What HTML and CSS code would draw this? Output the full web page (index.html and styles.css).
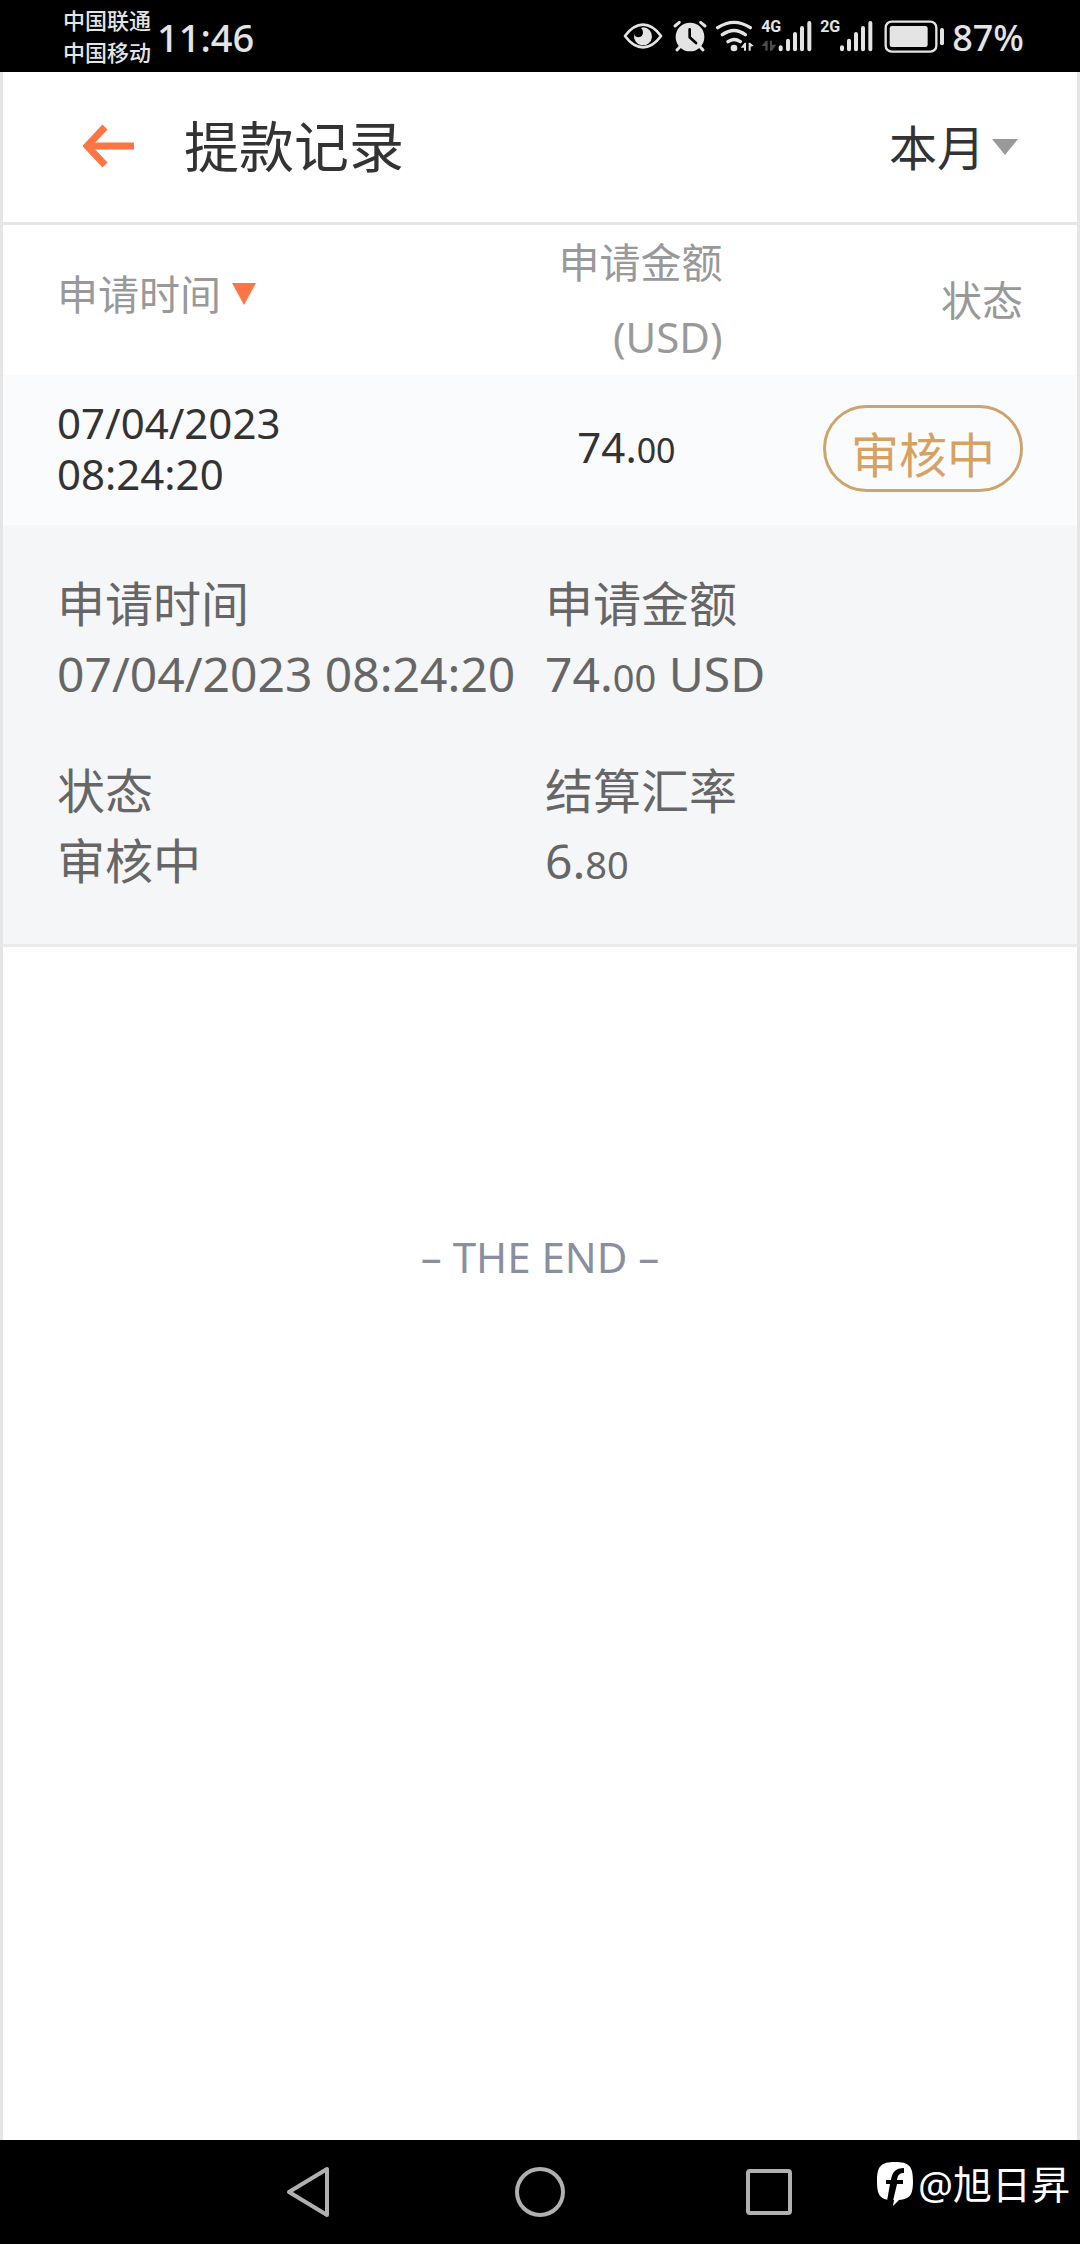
FILE: index.html
```html
<!DOCTYPE html>
<html lang="zh-CN">
<head>
<meta charset="utf-8">
<meta name="viewport" content="width=device-width, initial-scale=1">
<title>提款记录</title>
<link rel="stylesheet" href="styles.css">
</head>
<body>
<div class="status-bar">
  <div class="carriers"><span>中国联通</span><span>中国移动</span></div>
  <span class="clock">11:46</span>
  <div class="indicators">
    <svg width="43" height="36" viewBox="66 54 129 108" aria-hidden="true">
      <path d="M75 108Q100 74 129 74Q158 74 183 108Q158 142 129 142Q100 142 75 108Z" fill="none" stroke="#e4e4e4" stroke-width="8" stroke-linejoin="round"/>
      <path d="M129 82A27 27 0 1 1 103 102Q105 112 116 112Q129 110 129 96Q129 90 123 84Z" fill="#e4e4e4"/>
    </svg>
    <svg width="38" height="36" viewBox="213 54 114 108" aria-hidden="true">
      <circle cx="270" cy="111" r="43" fill="#e4e4e4"/>
      <path d="M225 78L238 67M315 78L302 67" stroke="#e4e4e4" stroke-width="9" stroke-linecap="round"/>
      <path d="M240 140L231 150M300 140L309 150" stroke="#e4e4e4" stroke-width="9" stroke-linecap="round"/>
      <path d="M269 88V112L288 129" fill="none" stroke="#000" stroke-width="8" stroke-linecap="round" stroke-linejoin="round"/>
    </svg>
    <svg width="40" height="36" viewBox="345 54 120 108" aria-hidden="true">
      <path d="M353 83Q402 51 451 83M367 104Q402 79 436 104M384 125Q402 112 421 125" fill="none" stroke="#e4e4e4" stroke-width="10" stroke-linecap="round"/>
      <circle cx="402" cy="144" r="10" fill="#e4e4e4"/>
      <path d="M422 143L434 128H438V152H432V143ZM446 128H450L461 137L452 140V152H446Z" fill="#e4e4e4"/>
    </svg>
    <div class="signal">
      <span class="network">4G</span>
      <svg width="53" height="36" viewBox="483 54 159 108" aria-hidden="true">
        <path d="M485 138L498 122H503V152H496V138ZM510 122H516V134H529L516 152H510Z" fill="#4b4b4b"/>
        <path d="M542 142V148M564 122V148M585 102V148M606 84V148M628 69V148" stroke="#e4e4e4" stroke-width="12" stroke-linecap="round"/>
      </svg>
    </div>
    <div class="signal">
      <span class="network">2G</span>
      <svg width="55" height="36" viewBox="660 54 165 108" aria-hidden="true">
        <path d="M726 142V148M747 122V148M768 102V148M789 84V148M811 69V148" stroke="#e4e4e4" stroke-width="12" stroke-linecap="round"/>
      </svg>
    </div>
    <svg width="65" height="36" viewBox="843 54 195 108" aria-hidden="true">
      <rect x="857" y="65" width="152" height="90" rx="18" fill="none" stroke="#e4e4e4" stroke-width="7"/>
      <rect x="869" y="78" width="114" height="63" rx="7" fill="#e4e4e4"/>
      <rect x="1020" y="84" width="12" height="52" rx="6" fill="#e4e4e4"/>
    </svg>
    <span class="battery-level">87%</span>
  </div>
</div>

<main class="page">
  <header class="toolbar">
    <button class="back" type="button" aria-label="返回">
      <svg width="52" height="44" viewBox="0 0 52 44" aria-hidden="true">
        <path d="M51 22H5M22 3L4 22L22 41" fill="none" stroke="#fd7545" stroke-width="7"/>
      </svg>
    </button>
    <h1 class="title">提款记录</h1>
    <label class="period">
      <select class="period-select" aria-label="时间范围"><option>本月</option></select>
      <svg width="26" height="16" viewBox="0 0 26 16" aria-hidden="true"><path d="M0 0H26L13 16Z" fill="#999"/></svg>
    </label>
  </header>

  <table class="records">
    <colgroup><col class="col-time"><col class="col-amount"><col class="col-status"></colgroup>
    <thead>
      <tr>
        <th class="time" scope="col">
          <button class="sort" type="button">申请时间
            <svg width="24" height="22" viewBox="0 0 24 22" aria-hidden="true"><path d="M0 0H24L12 22Z" fill="#fd7545"/></svg>
          </button>
        </th>
        <th class="amount" scope="col">申请金额<br><span class="unit">(USD)</span></th>
        <th class="status" scope="col">状态</th>
      </tr>
    </thead>
    <tbody>
      <tr class="record">
        <td class="time">07/04/2023<br>08:24:20</td>
        <td class="amount">74.<span class="cents">00</span></td>
        <td class="status"><span class="badge">审核中</span></td>
      </tr>
      <tr class="record-detail">
        <td colspan="3">
          <dl class="details">
            <div><dt>申请时间</dt><dd>07/04/2023 08:24:20</dd></div>
            <div><dt>申请金额</dt><dd>74.<span class="cents">00</span> USD</dd></div>
            <div><dt>状态</dt><dd>审核中</dd></div>
            <div><dt>结算汇率</dt><dd>6.<span class="cents">80</span></dd></div>
          </dl>
        </td>
      </tr>
    </tbody>
  </table>

  <p class="end">– THE END –</p>
</main>

<nav class="nav-bar" aria-label="系统导航">
  <button type="button" aria-label="返回">
    <svg width="52" height="52" viewBox="0 0 52 52" aria-hidden="true"><path d="M5 26L43 3V49Z" fill="none" stroke="#b0b0b0" stroke-width="4" stroke-linejoin="round"/></svg>
  </button>
  <button type="button" aria-label="主屏幕">
    <svg width="52" height="52" viewBox="0 0 52 52" aria-hidden="true"><circle cx="26" cy="26" r="23" fill="none" stroke="#b0b0b0" stroke-width="4"/></svg>
  </button>
  <button type="button" aria-label="最近任务">
    <svg width="52" height="52" viewBox="0 0 52 52" aria-hidden="true"><rect x="4" y="5" width="42" height="42" rx="2" fill="none" stroke="#b0b0b0" stroke-width="4"/></svg>
  </button>
  <div class="watermark">
    <svg width="38" height="46" viewBox="0 0 38 46" aria-hidden="true">
      <path d="M19 1C33 1 37 5 37 20C37 34 34 38 23 39L17 45L18 39H12C4 37 1 34 1 20C1 5 5 1 19 1Z" fill="#fff"/>
      <path d="M28 7C20 7 16 11 15 19H10V23H14L11 40H17L21 23H27V19H21C22 14 23 12 28 12Z" fill="#000"/>
    </svg>
    <span>@旭日昇</span>
  </div>
</nav>
</body>
</html>
```
FILE: styles.css
```css
* {
  box-sizing: border-box;
}

body {
  margin: 0;
  min-height: 100vh;
  display: flex;
  flex-direction: column;
  background: #fff;
  color: #333;
  font-family: "Noto Sans", "Noto Sans CJK SC", sans-serif;
  font-size: 42px;
}

button,
select {
  margin: 0;
  padding: 0;
  border: 0;
  background: none;
  color: inherit;
  font: inherit;
}

svg {
  display: block;
  flex: none;
}

/* System status bar */
.status-bar {
  height: 72px;
  padding: 0 56px 0 63px;
  display: flex;
  align-items: center;
  gap: 6px;
  background: #000;
  color: #e4e4e4;
}

.carriers {
  display: flex;
  flex-direction: column;
  font-size: 22px;
  font-weight: 500;
  line-height: 32px;
}

.clock {
  padding-top: 2px;
  font-size: 38px;
  font-weight: 500;
}

.indicators {
  margin-left: auto;
  display: flex;
  align-items: center;
  gap: 6px;
}

.signal {
  position: relative;
}

.network {
  position: absolute;
  top: 0;
  left: 0;
  font-family: "Liberation Sans Narrow", "Roboto", sans-serif;
  font-size: 16px;
  font-weight: 700;
  line-height: 18px;
}

.battery-level {
  padding-top: 2px;
  font-size: 36px;
  font-weight: 500;
}

/* Page */
.page {
  flex: 1;
  border: solid #e5e5e5;
  border-width: 0 3px;
}

.toolbar {
  height: 153px;
  padding: 0 59px 2px 80px;
  display: flex;
  align-items: center;
  border-bottom: 3px solid #e5e5e5;
}

.title {
  margin: 0 auto 0 49px;
  padding-bottom: 6px;
  font-size: 55px;
  font-weight: 400;
}

.period {
  padding-top: 2px;
  display: flex;
  align-items: center;
  gap: 6px;
}

.period-select {
  appearance: none;
  font-size: 48px;
}

/* Record list */
.records {
  width: 100%;
  table-layout: fixed;
  border-spacing: 0;
}

.col-time {
  width: 40%;
}

.col-amount {
  width: 27%;
}

.col-status {
  width: 33%;
}

.records th,
.records td {
  padding: 0;
}

.records th {
  height: 150px;
  color: #999;
  font-size: 41px;
  font-weight: 400;
  line-height: 75px;
}

.records .time {
  padding-left: 54px;
  text-align: left;
}

.records .amount,
.records .status {
  text-align: right;
}

.records .status {
  padding-right: 54px;
}

.sort {
  padding-bottom: 12px;
  display: flex;
  align-items: center;
  gap: 11px;
}

.unit {
  font-size: 42px;
  line-height: 1;
}

.record {
  background: #fafbfd;
}

.record td {
  height: 150px;
  padding-bottom: 4px;
  line-height: 51px;
}

.record .amount {
  padding-right: 47px;
  padding-bottom: 8px;
}

.cents {
  font-size: 38px;
  line-height: 1;
}

.record .cents {
  font-size: 34px;
}

.badge {
  display: inline-block;
  padding: 12px 25px 0;
  border: 3px solid #cda46d;
  border-radius: 44px;
  color: #d5a263;
  font-size: 48px;
  line-height: 69px;
  vertical-align: middle;
}

.record-detail td {
  background: #f5f6f8;
  border-bottom: 3px solid #e9eaeb;
}

.details {
  margin: 0;
  padding: 44px 54px 48px;
  display: grid;
  grid-template-columns: 1fr 1fr;
  gap: 47px 10px;
  color: #666;
  font-size: 48px;
  line-height: 70px;
}

.details dd {
  margin: 0;
  white-space: nowrap;
}

.end {
  margin: 280px 0 0;
  color: #898f9f;
  line-height: 60px;
  text-align: center;
}

/* System navigation */
.nav-bar {
  position: relative;
  height: 104px;
  display: flex;
  justify-content: center;
  align-items: center;
  background: #000;
}

.nav-bar button {
  width: 230px;
  display: flex;
  justify-content: center;
}

.watermark {
  position: absolute;
  right: 10px;
  bottom: 34px;
  display: flex;
  align-items: center;
  gap: 4px;
  color: #fff;
  font-size: 39px;
  line-height: 52px;
}
```
